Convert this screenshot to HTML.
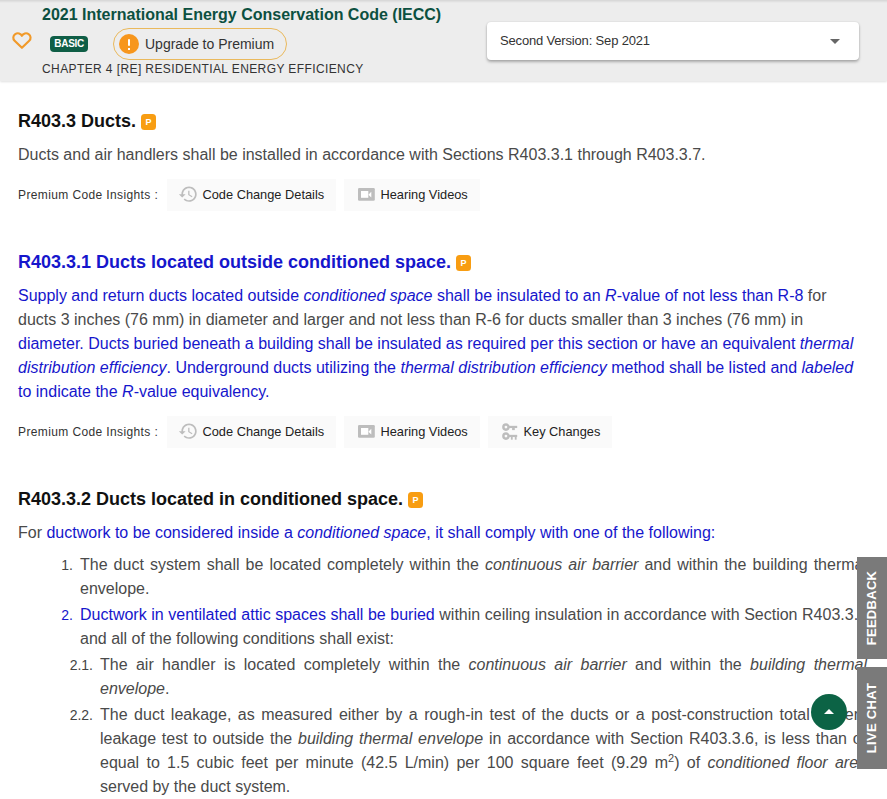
<!DOCTYPE html>
<html><head><meta charset="utf-8">
<style>
*{box-sizing:border-box}
html,body{margin:0;padding:0}
body{width:887px;height:799px;overflow:hidden;position:relative;background:#fff;font-family:"Liberation Sans",sans-serif;color:#444}
.abs{position:absolute;white-space:nowrap}
.hdr{position:absolute;left:0;top:0;width:887px;height:81px;background:#ededed;box-shadow:0 1px 2px rgba(0,0,0,.12)}
.hdr:before{content:"";position:absolute;left:0;top:0;right:0;height:3px;background:linear-gradient(#d5d5d5,#ededed)}
.title{left:42px;top:5px;font-size:16px;font-weight:bold;color:#0c5040;line-height:20px}
.badge{left:50px;top:36px;width:38px;height:16px;border-radius:4px;background:#0f5e46;color:#fff;font-size:10px;font-weight:bold;letter-spacing:-0.3px;text-indent:0.3px;line-height:15.5px;text-align:center}
.pill{left:113px;top:28px;width:174px;height:32px;border:1px solid #eab95c;border-radius:16px}
.pill .ic{position:absolute;left:5px;top:5px;width:20px;height:20px;border-radius:50%;background:#f7961c}
.pill .ic:before{content:"";position:absolute;left:9px;top:5px;width:2px;height:7px;background:#fff;border-radius:1px}
.pill .ic:after{content:"";position:absolute;left:9px;top:13.5px;width:2px;height:2px;background:#fff}
.pill .tx{position:absolute;left:31px;top:6px;font-size:14px;line-height:18px;color:#333}
.chap{left:42px;top:61px;font-size:12px;letter-spacing:0.4px;line-height:16px;color:#333}
.sel{left:487px;top:22px;width:372px;height:38px;background:#fff;border-radius:4px;box-shadow:0 2px 3px rgba(0,0,0,.28),0 0 2px rgba(0,0,0,.12)}
.sel .tx{position:absolute;left:13px;top:10px;font-size:13px;letter-spacing:-0.17px;line-height:18px;color:#333}
.sel .car{position:absolute;left:343px;top:17px;width:0;height:0;border-left:5px solid transparent;border-right:5px solid transparent;border-top:5px solid #666}

.h{font-size:18px;font-weight:bold;color:#111;line-height:24px;left:18px}
.h.blue{color:#1616cc}
.p{left:18px;font-size:16px;line-height:24px;color:#4a4a4a}
.b{color:#1616cc}
i{font-style:italic}
.pb{display:inline-block;width:15px;height:16px;border-radius:3.5px;background:#f89d12;color:#fff;font-size:9px;font-weight:bold;line-height:16px;text-align:center;vertical-align:top;position:relative}
.lbl{left:18px;font-size:12px;letter-spacing:0.38px;line-height:16px;color:#333}
.btn{position:absolute;height:32px;background:#fafafa}
.btn .tx{position:absolute;top:8px;font-size:12.8px;line-height:16px;color:#222;white-space:nowrap}
.btn svg{position:absolute}

.li{position:absolute;font-size:16px;line-height:24px;color:#4a4a4a;white-space:nowrap}
.j{text-align:justify;text-align-last:justify;white-space:normal}
.num{position:absolute;font-size:14px;line-height:24px;color:#444;text-align:right}

.p,.lbl,.li{margin-top:1px}
.num{margin-top:1.4px}
.tab{position:absolute;left:857px;width:30px;background:#7a7a7a}
.tab span{position:absolute;left:50%;top:50%;transform:translate(-50%,-50%) rotate(-90deg);color:#fff;font-size:13px;font-weight:bold;letter-spacing:0.3px;white-space:nowrap;line-height:14px}
.up{position:absolute;left:811px;top:694px;width:36px;height:36px;border-radius:50%;background:#0c6345}
.up:after{content:"";position:absolute;left:13px;top:15px;border-left:5px solid transparent;border-right:5px solid transparent;border-bottom:5px solid #fff}
</style></head><body>

<div class="hdr">
  <svg class="abs" style="left:10px;top:29px" width="24" height="24" viewBox="0 0 24 24"><path transform="translate(3.3 4.3) scale(0.98 0.95)" fill="none" stroke="#f19a2a" stroke-width="2.2" stroke-linejoin="round" d="M8.8 15.3L1.35 7.85A4.6 4.6 0 1 1 8.8 2.72A4.6 4.6 0 1 1 16.25 7.85Z"/></svg>
  <div class="abs title">2021 International Energy Conservation Code (IECC)</div>
  <div class="abs badge">BASIC</div>
  <div class="abs pill"><div class="ic"></div><div class="tx">Upgrade to Premium</div></div>
  <div class="abs chap">CHAPTER 4 [RE] RESIDENTIAL ENERGY EFFICIENCY</div>
  <div class="abs sel"><div class="tx">Second Version: Sep 2021</div><div class="car"></div></div>
</div>

<!-- R403.3 -->
<div class="abs h" style="top:109px">R403.3 Ducts. <span class="pb" style="top:5px">P</span></div>
<div class="abs p" style="top:142px">Ducts and air handlers shall be installed in accordance with Sections R403.3.1 through R403.3.7.</div>
<div class="abs lbl" style="top:186px">Premium Code Insights :</div>
<div class="btn" style="left:167px;top:179px;width:169px">
    <svg style="left:11px;top:5px" width="20.4" height="20.4" viewBox="0 0 24 24"><path fill="#bdbdbd" d="M13 3c-4.97 0-9 4.03-9 9H1l3.89 3.89.07.14L9 12H6c0-3.87 3.13-7 7-7s7 3.13 7 7-3.13 7-7 7c-1.93 0-3.68-.79-4.94-2.06l-1.42 1.42C8.27 19.99 10.51 21 13 21c4.97 0 9-4.03 9-9s-4.03-9-9-9zm-1 5v5l4.28 2.54.72-1.21-3.5-2.08V8H12z"/></svg><div class="tx" style="left:35.5px">Code Change Details</div>
</div>
<div class="btn" style="left:344px;top:179px;width:136px">
  <svg style="left:14px;top:9px" width="17" height="13" viewBox="0 0 17 13"><rect x="0" y="0" width="16.8" height="12.8" rx="1.2" fill="#bdbdbd"/><rect x="3" y="3" width="7.3" height="6.8" fill="#fff"/><polygon points="10.4,6.8 13.3,3.8 13.3,9.6" fill="#fff"/></svg><div class="tx" style="left:36.5px">Hearing Videos</div>
</div>

<!-- R403.3.1 -->
<div class="abs h blue" style="top:250px">R403.3.1 Ducts located outside conditioned space. <span class="pb" style="top:5px">P</span></div>
<div class="abs p" style="top:283px">
<div><span class="b">Supply and return ducts located outside <i>conditioned space</i> shall be insulated to an <i>R</i>-value of not less than R-8</span> for</div>
<div>ducts 3 inches (76 mm) in diameter and larger and not less than R-6 for ducts smaller than 3 inches (76 mm) in</div>
<div class="b">diameter. Ducts buried beneath a building shall be insulated as required per this section or have an equivalent <i>thermal</i></div>
<div class="b"><i>distribution efficiency</i>. Underground ducts utilizing the <i>thermal distribution efficiency</i> method shall be listed and <i>labeled</i></div>
<div class="b">to indicate the <i>R</i>-value equivalency.</div>
</div>
<div class="abs lbl" style="top:423px">Premium Code Insights :</div>
<div class="btn" style="left:167px;top:416px;width:169px">
  <svg style="left:11px;top:5px" width="20.4" height="20.4" viewBox="0 0 24 24"><path fill="#bdbdbd" d="M13 3c-4.97 0-9 4.03-9 9H1l3.89 3.89.07.14L9 12H6c0-3.87 3.13-7 7-7s7 3.13 7 7-3.13 7-7 7c-1.93 0-3.68-.79-4.94-2.06l-1.42 1.42C8.27 19.99 10.51 21 13 21c4.97 0 9-4.03 9-9s-4.03-9-9-9zm-1 5v5l4.28 2.54.72-1.21-3.5-2.08V8H12z"/></svg><div class="tx" style="left:35.5px">Code Change Details</div>
</div>
<div class="btn" style="left:344px;top:416px;width:136px">
  <svg style="left:14px;top:9px" width="17" height="13" viewBox="0 0 17 13"><rect x="0" y="0" width="16.8" height="12.8" rx="1.2" fill="#bdbdbd"/><rect x="3" y="3" width="7.3" height="6.8" fill="#fff"/><polygon points="10.4,6.8 13.3,3.8 13.3,9.6" fill="#fff"/></svg><div class="tx" style="left:36.5px">Hearing Videos</div>
</div>
<div class="btn" style="left:488px;top:416px;width:124px">
  <svg style="left:10px;top:3px" width="24" height="24" viewBox="0 0 24 24"><g fill="none" stroke="#bdbdbd" stroke-width="2.4"><circle cx="7.96" cy="8.1" r="2.6"/><circle cx="7.96" cy="17.1" r="2.6"/></g><g fill="#bdbdbd"><rect x="10" y="6.85" width="9.2" height="2.2"/><rect x="14.1" y="9" width="2.7" height="2.1"/><rect x="10" y="15.85" width="9.2" height="2.2"/><rect x="12.9" y="18" width="1.8" height="2.7"/><rect x="16.8" y="18" width="1.8" height="2.7"/></g></svg><div class="tx" style="left:35.5px">Key Changes</div>
</div>

<!-- R403.3.2 -->
<div class="abs h" style="top:487px">R403.3.2 Ducts located in conditioned space. <span class="pb" style="top:5px">P</span></div>
<div class="abs p" style="top:520px">For <span class="b">ductwork to be considered inside a <i>conditioned space</i>, it shall comply with one of the following:</span></div>

<div class="num" style="left:41px;width:32px;top:552px">1.</div>
<div class="li j" style="left:80px;width:787px;top:552px">The duct system shall be located completely within the <i>continuous air barrier</i> and within the building thermal</div>
<div class="li" style="left:80px;top:576px">envelope.</div>

<div class="num" style="left:41px;width:32px;top:602px;color:#1616cc">2.</div>
<div class="li j" style="left:80px;width:787px;top:602px"><span class="b">Ductwork in ventilated attic spaces shall be buried</span> within ceiling insulation in accordance with Section R403.3.3</div>
<div class="li" style="left:80px;top:626px">and all of the following conditions shall exist:</div>

<div class="num" style="left:53px;width:40px;top:652px">2.1.</div>
<div class="li j" style="left:100px;width:767px;top:652px">The air handler is located completely within the <i>continuous air barrier</i> and within the <i>building thermal</i></div>
<div class="li" style="left:100px;top:676px"><i>envelope</i>.</div>

<div class="num" style="left:53px;width:40px;top:702px">2.2.</div>
<div class="li j" style="left:100px;width:767px;top:702px">The duct leakage, as measured either by a rough-in test of the ducts or a post-construction total system</div>
<div class="li j" style="left:100px;width:767px;top:726px">leakage test to outside the <i>building thermal envelope</i> in accordance with Section R403.3.6, is less than or</div>
<div class="li j" style="left:100px;width:767px;top:750px">equal to 1.5 cubic feet per minute (42.5 L/min) per 100 square feet (9.29 m<sup style="font-size:11px;line-height:0">2</sup>) of <i>conditioned floor area</i></div>
<div class="li" style="left:100px;top:774px">served by the duct system.</div>

<div class="tab" style="top:557px;height:102px"><span>FEEDBACK</span></div>
<div class="tab" style="top:667px;height:102px"><span>LIVE CHAT</span></div>
<div class="up"></div>

</body></html>
